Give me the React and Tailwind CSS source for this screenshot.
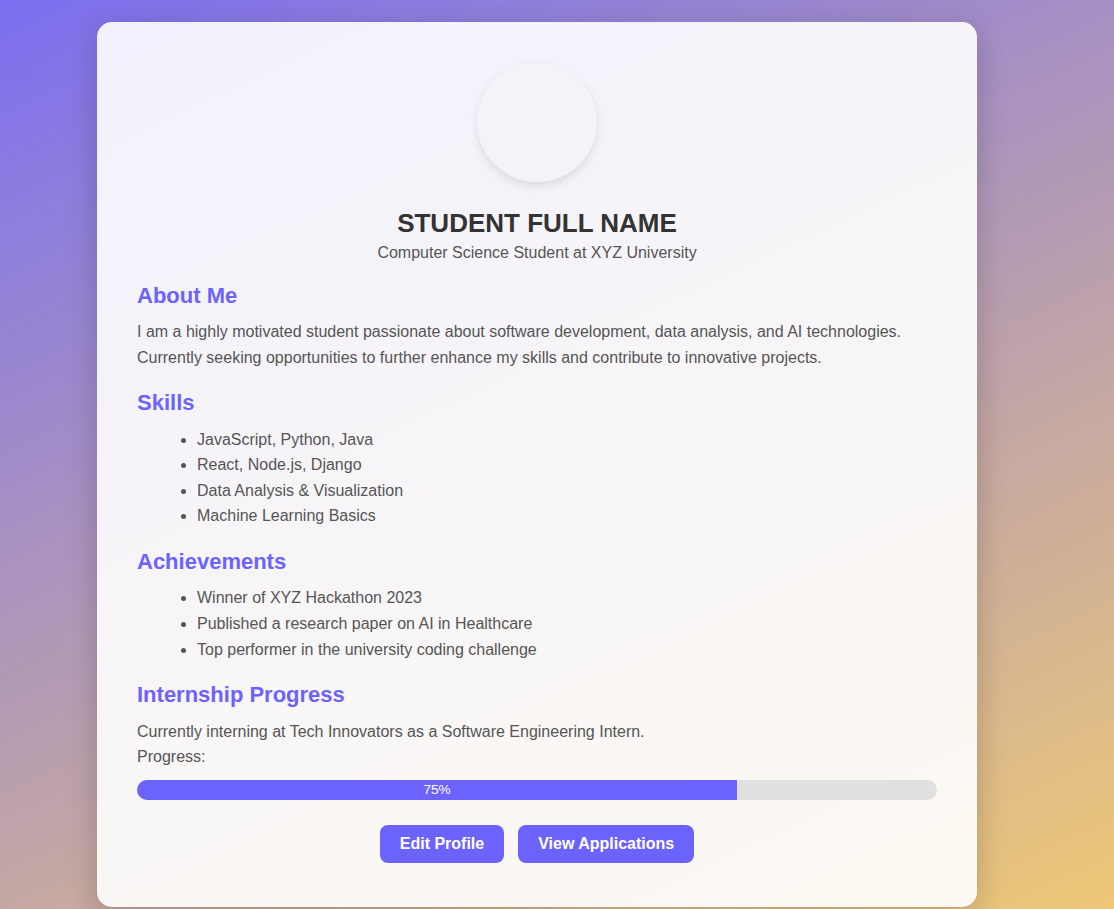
import React from 'react';

const skills = [
    'JavaScript, Python, Java',
    'React, Node.js, Django',
    'Data Analysis & Visualization',
    'Machine Learning Basics'
];

const achievements = [
    'Winner of XYZ Hackathon 2023',
    'Published a research paper on AI in Healthcare',
    'Top performer in the university coding challenge'
];

const Section = ({ title, children }) => (
    <div className="mb-[20px]">
        <h2 className="text-[22px] leading-[26.4px] font-bold text-[#6c63ff] mb-[10px]">{title}</h2>
        {children}
    </div>
);

const App = () => {
    const progress = 75;

    return (
        <div className="min-h-screen pt-[22px] bg-[linear-gradient(155deg,#7b6ff0,#eec876)] font-['Liberation_Sans',Arial,sans-serif] text-[16px] leading-[25.6px] text-[#555]">
            <div className="w-[880px] ml-[97px] rounded-[15px] bg-white/90 px-[40px] pt-[40px] pb-[44px] shadow-[0_8px_30px_rgba(0,0,0,0.2)]">
                <div className="flex flex-col items-center mb-[17px]">
                    <div className="w-[120px] h-[120px] rounded-full bg-[#f4f3f9] shadow-[0_4px_10px_rgba(0,0,0,0.1)]" />
                    <h1 className="mt-[27px] mb-[3px] text-[26px] leading-[28px] font-bold text-[#333]">
                        STUDENT FULL NAME
                    </h1>
                    <p>Computer Science Student at XYZ University</p>
                </div>

                <Section title="About Me">
                    <p>
                        I am a highly motivated student passionate about software development, data analysis, and AI technologies.
                        Currently seeking opportunities to further enhance my skills and contribute to innovative projects.
                    </p>
                </Section>

                <Section title="Skills">
                    <ul className="list-disc pl-[60px]">
                        {skills.map((s) => <li key={s}>{s}</li>)}
                    </ul>
                </Section>

                <Section title="Achievements">
                    <ul className="list-disc pl-[60px]">
                        {achievements.map((a) => <li key={a}>{a}</li>)}
                    </ul>
                </Section>

                <div>
                    <h2 className="text-[22px] leading-[26.4px] font-bold text-[#6c63ff] mb-[10px]">Internship Progress</h2>
                    <p>
                        Currently interning at Tech Innovators as a Software Engineering Intern.
                        <br />
                        Progress:
                    </p>
                    <div className="mt-[10px] h-[20px] rounded-[10px] bg-[#e0e0e0] overflow-hidden">
                        <div
                            className="h-full bg-[#6c63ff] flex items-center justify-center text-white text-[13.6px] leading-[20px]"
                            style={{ width: `${progress}%` }}
                        >
                            {progress}%
                        </div>
                    </div>
                </div>

                <div className="mt-[25px] flex justify-center gap-[14px]">
                    <button className="px-[20px] py-[10px] rounded-[8px] bg-[#6c63ff] text-white font-bold text-[16px] leading-[18.4px]">
                        Edit Profile
                    </button>
                    <button className="px-[20px] py-[10px] rounded-[8px] bg-[#6c63ff] text-white font-bold text-[16px] leading-[18.4px]">
                        View Applications
                    </button>
                </div>
            </div>
        </div>
    );
};

export default App;
